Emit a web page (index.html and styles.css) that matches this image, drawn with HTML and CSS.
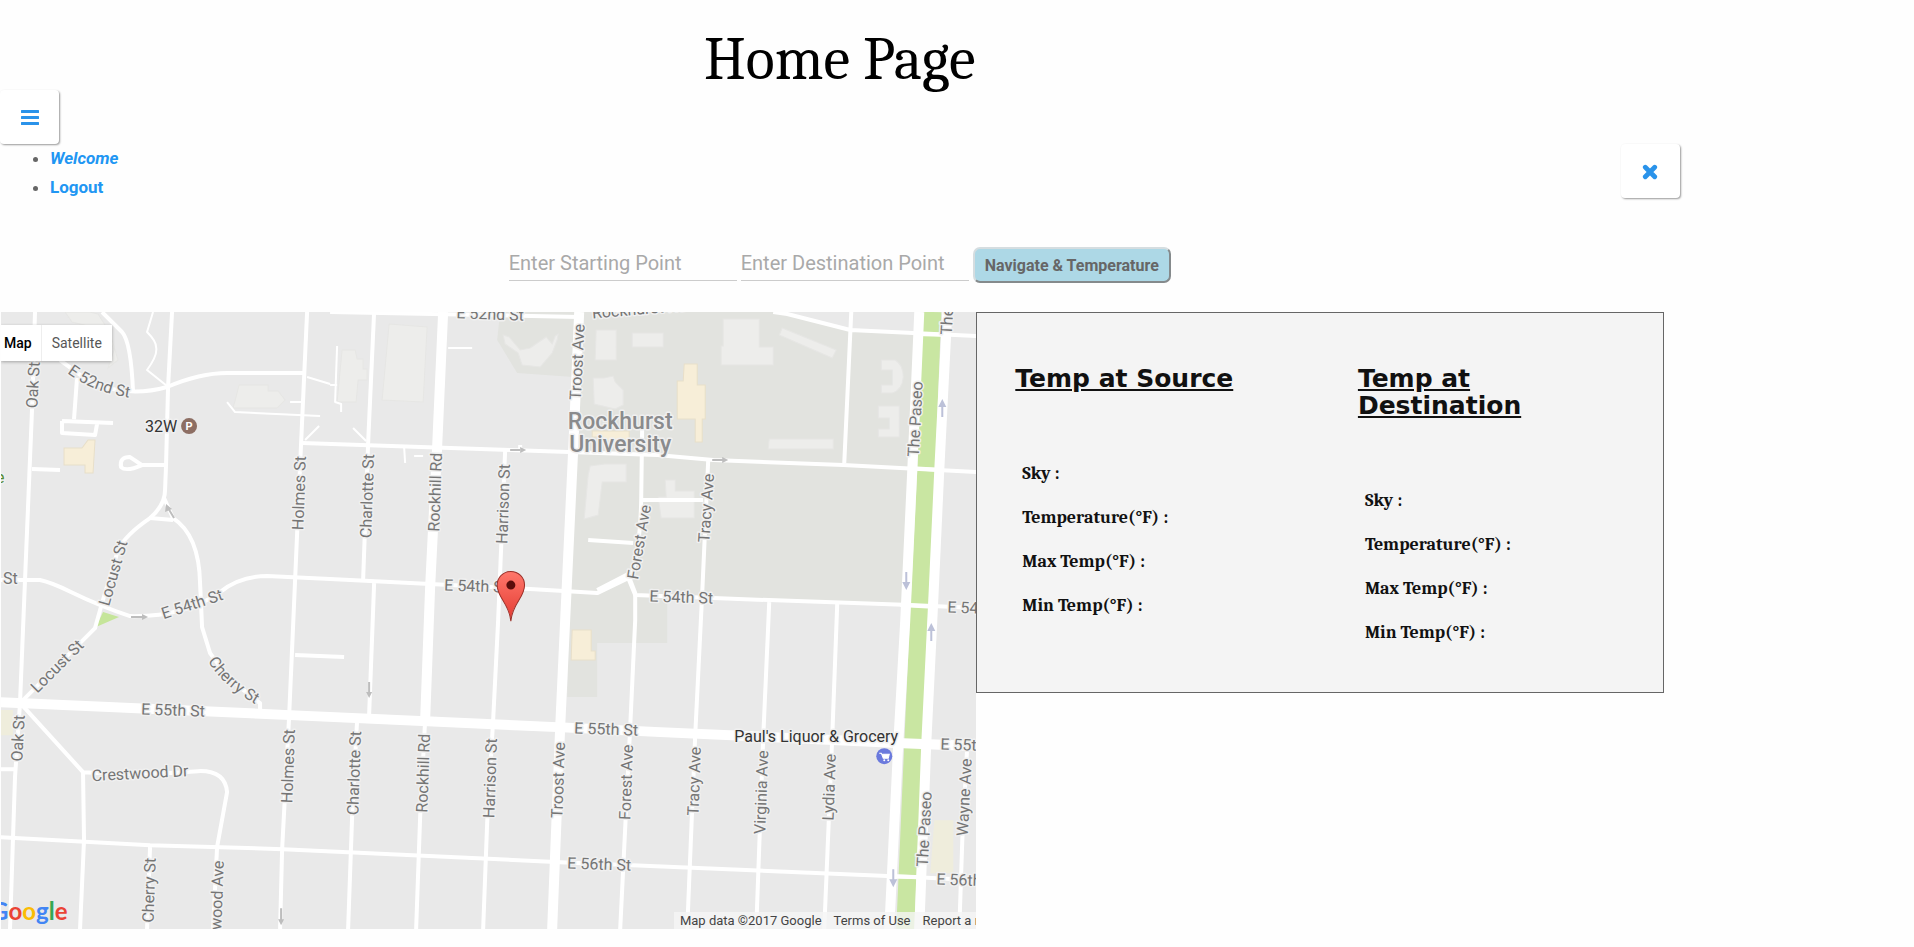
FILE: index.html
```html
<!DOCTYPE html>
<html lang="en">
<head>
<meta charset="utf-8">
<title>Home Page</title>
<link rel="stylesheet" href="styles.css">
</head>
<body>
<div class="page">
  <header>
    <h1 class="title">Home Page</h1>
    <button class="icon-button" type="button" aria-label="Open menu">
      <svg class="icon" viewBox="0 0 18 18" aria-hidden="true"><path d="M1 3.500h16M1 9.500h16M1 15.500h16" stroke="currentColor" stroke-width="3" stroke-linecap="round"/></svg>
    </button>
    <div class="menu">
      <ul class="menu-list">
        <li><a class="welcome" href="#">Welcome</a></li>
        <li><a href="#">Logout</a></li>
      </ul>
      <button class="icon-button" type="button" aria-label="Close menu">
        <svg class="icon" viewBox="0 0 18 18" aria-hidden="true"><path d="M4.300 5.300l9.400 9.400M13.700 5.300l-9.400 9.400" stroke="currentColor" stroke-width="4.800" stroke-linecap="round"/></svg>
      </button>
    </div>
  </header>
  <form class="route">
    <input type="text" placeholder="Enter Starting Point" aria-label="Enter Starting Point">
    <input type="text" placeholder="Enter Destination Point" aria-label="Enter Destination Point">
    <button class="submit" type="button">Navigate &amp; Temperature</button>
  </form>
  <main class="content">
    <section class="map" aria-label="Map">
      <svg class="map-canvas" viewBox="1 312 975 617" role="img" aria-label="Street map">
        <rect x="0" y="312" width="976" height="617" fill="#e9e9e9"/>
        <path class="campus" d="M500 312L497 340L517 373L573 377L567 697H597V643H667V597L910 605L919 333L850 330L787 314L773 312Z"/>
        <path class="lot" d="M0 710H13V735H0ZM934 820H953V873H930Z"/>
        <g class="building">
          <path d="M65 312L72 322L92 327L108 335L114 350L108 368L118 360L110 333L98 314L90 312Z"/>
          <path d="M239 385H268V391H278L285 400L277 408H233Z"/>
          <path d="M342 350H355L357 359H363V369H367V380H358L356 402H337Z"/>
          <path d="M389 324L427 327L423 402L382 400Z"/>
          <path d="M503 335L509 337L520 350L530 348L540 341L546 337L552 344L555 336L558 334L557 340L552 353L540 367L522 365L518 353L505 344Z"/>
          <path d="M596 330H616V360H595ZM632 333H663V347H632ZM593 378H604L613 376L615 382L623 390V405L615 409L594 404Z"/>
          <path d="M723 319H759V347H773V365H721V346H723Z"/>
          <path d="M782 328L836 350L832 358L779 335Z"/>
          <path d="M769 439H833V449H768ZM881 360H895Q903 365 903 377Q902 390 892 393H881V385H892V370H881ZM878 406H899V437H878V429H889V418H878Z"/>
          <path d="M590 466L605 464H626V482H602L598 515L584 519L588 475ZM665 480H675V491H694V518H661L658 497H666Z"/>
        </g>
        <g class="hall">
          <path d="M64 448H82L88 440H95L93 473H85V465H64Z"/>
          <path d="M684 364H697V385H705V419H702V442H695V419H677V381H683Z"/>
          <path d="M592 431H629V441H602V437H592ZM572 630H591V651H595V660H571Z"/>
        </g>
        <path class="park" d="M103 612L119 617L96 627Z"/>
        <path class="median" d="M932 312L926 470L919 610L913 743L905 929"/>
        <g class="lane">
          <path d="M153 312L147 332Q156 341 156 347Q158 355 147 370L167 386M227 402L235 412L320 416M290 402H303M307 377L330 384M337 346L335 402L341 404V412M330 385H337M305 440L319 426M353 428L366 441M448 348H472M414 456H423M404 447L405 463"/>
        </g>
        <g class="street">
          <path d="M35 312L32 410L25 580L20 703L15 777L10 929"/>
          <path d="M102 312L122 332Q131 342 133 392M60 360L90 382Q128 398 167 387Q200 373 227 373H303"/>
          <path d="M172 312L168 387L166 465L165 490Q165 505 150 518Q125 535 118 550L102 603L95 628L20 703"/>
          <path d="M164 498L173 518Q199 535 200 583L202 627L210 653Q228 680 260 703V713M150 518L173 520"/>
          <path d="M77 378L74 419M62 421L113 423M97 424L95 435L62 433V421M32 469L60 470M166 465H142L130 457Q119 457 121 467Q126 472 142 465"/>
          <path d="M0 580H40C64 585 75 598 130 616Q185 617 220 592Q240 576 267 576L330 579L530 589L597 593L628 578L635 595L713 598L910 605L976 608"/>
          <path d="M302 443L510 450L657 455L713 460L843 465L976 472"/>
          <path d="M307 312L301 443L295 580L289 717L282 850L280 929"/>
          <path d="M374 312L368 443L363 580M374 583L373 610L369 715M357 720L352 817L348 929"/>
          <path d="M425 720L420 817L416 929M505 450L498 620L493 720L487 823L483 929"/>
          <path d="M642 425L641 500Q640 550 630 580L635 593V620L630 727L620 929M642 500H703M588 540L633 543M597 590L628 574"/>
          <path d="M708 460L702 593L695 735L687 929M769 602L763 737L756 929M837 603L832 737L824 929"/>
          <path d="M520 445V452M330 312L579 317M773 312L787 314L850 330L976 336M851 312L844 463"/>
          <path d="M0 837L150 845L283 849L560 862L917 877L976 880M295 655L344 657M0 769H17"/>
          <path d="M23 706L83 772L84 840L80 929M83 772Q140 776 198 771Q225 770 227 792L217 847L213 929M150 847L147 929M967 745L962 840L959 929"/>
        </g>
        <g class="avenue">
          <path d="M443 312L437 447L430 587L425 720M579 312L573 450L565 620L560 727L552 929"/>
          <path d="M919 312L912 470L905 620L898 743L889 929M947 312L939 470L933 600L926 743L919 929"/>
          <path d="M0 702L290 715L557 727L660 732L903 743L976 746"/>
        </g>
        <path class="crossing" d="M915 334L950 335M908 468L943 470M900 605L937 607M897 743L930 744M888 876L924 877"/>
        <g class="arrow">
          <path d="M174 518L168 508M131 617H143M510 450H520M712 460H723M369 682V693M281 908V920"/>
          <path d="M165 512L166 504L172 509ZM142 614L148 617L142 620ZM520 447L526 450L520 453ZM722 457L728 460L722 463ZM366 692H372L369 698ZM278 919H284L281 925Z" fill="#bdbdbd" stroke="none"/>
          <path d="M942 417V405M906 572V584M931 641V629M893 869V880" stroke="#bcc1d8"/>
          <path d="M938 407H946L942 399ZM902 582H910L906 590ZM927 631H935L931 623ZM889 879H897L893 887Z" fill="#bcc1d8" stroke="none"/>
        </g>
        <defs>
          <path id="curve-52nd" d="M67 373Q92 392 132 398"/>
          <path id="curve-cherry" d="M208 661Q222 686 262 708"/>
        </defs>
        <g class="label">
          <text transform="translate(33 385) rotate(-87)">Oak St</text>
          <text class="along"><textPath href="#curve-52nd">E 52nd St</textPath></text>
          <text class="along" x="3" y="584">St</text>
          <text transform="translate(113 573) rotate(-74)">Locust St</text>
          <text transform="translate(192 604) rotate(-18)">E 54th St</text>
          <text transform="translate(299 493) rotate(-88)">Holmes St</text>
          <text transform="translate(367 496) rotate(-88)">Charlotte St</text>
          <text transform="translate(435 492) rotate(-88)">Rockhill Rd</text>
          <text transform="translate(503 504) rotate(-88)">Harrison St</text>
          <text transform="translate(577 362) rotate(-87)">Troost Ave</text>
          <text transform="translate(639 542) rotate(-80)">Forest Ave</text>
          <text transform="translate(706 508) rotate(-86)">Tracy Ave</text>
          <text transform="translate(915 419) rotate(-87)">The Paseo</text>
          <text transform="translate(948 297) rotate(-87)">The Paseo</text>
          <text transform="translate(490 314) rotate(2)">E 52nd St</text>
          <text transform="translate(639 309) rotate(-5)">Rockhurst Rd</text>
          <text transform="translate(476 586) rotate(2)">E 54th St</text>
          <text transform="translate(681 597) rotate(2)">E 54th St</text>
          <text transform="translate(979 608) rotate(2)">E 54th St</text>
          <text transform="translate(57 666) rotate(-45)">Locust St</text>
          <text class="along"><textPath href="#curve-cherry">Cherry St</textPath></text>
          <text transform="translate(173 710) rotate(2)">E 55th St</text>
          <text transform="translate(606 729) rotate(2)">E 55th St</text>
          <text transform="translate(972 745) rotate(2)">E 55th St</text>
          <text transform="translate(599 864) rotate(2)">E 56th St</text>
          <text transform="translate(968 880) rotate(2)">E 56th St</text>
          <text transform="translate(18 738) rotate(-87)">Oak St</text>
          <text transform="translate(140 773) rotate(-3)">Crestwood Dr</text>
          <text transform="translate(288 766) rotate(-88)">Holmes St</text>
          <text transform="translate(149 890) rotate(-88)">Cherry St</text>
          <text transform="translate(217 895) rotate(-88)">wood Ave</text>
          <text transform="translate(354 773) rotate(-88)">Charlotte St</text>
          <text transform="translate(423 773) rotate(-88)">Rockhill Rd</text>
          <text transform="translate(490 778) rotate(-88)">Harrison St</text>
          <text transform="translate(558 780) rotate(-88)">Troost Ave</text>
          <text transform="translate(626 782) rotate(-88)">Forest Ave</text>
          <text transform="translate(694 781) rotate(-88)">Tracy Ave</text>
          <text transform="translate(761 792) rotate(-88)">Virginia Ave</text>
          <text transform="translate(829 787) rotate(-88)">Lydia Ave</text>
          <text transform="translate(924 829) rotate(-87)">The Paseo</text>
          <text transform="translate(964 797) rotate(-87)">Wayne Ave</text>
          <text class="district" x="620" y="421">Rockhurst</text>
          <text class="district" x="620" y="444">University</text>
          <text class="along place" x="145" y="432">32W</text>
          <text class="along place" x="734" y="742">Paul's Liquor &amp; Grocery</text>
          <text class="along green" x="-4" y="483">e</text>
        </g>
        <circle cx="189" cy="426" r="8" fill="#8d6e63"/>
        <text class="badge" x="189" y="430">P</text>
        <circle cx="884" cy="756" r="8" fill="#6b7add"/>
        <path d="M879 753H881L883 758H888L889 754H882" fill="#fff" stroke="#fff" stroke-width="1"/>
        <circle cx="884" cy="760" r="1" fill="#fff"/><circle cx="888" cy="760" r="1" fill="#fff"/>
        <defs><linearGradient id="pin" x2="0" y2="1"><stop offset="0" stop-color="#ff776b"/><stop offset="1" stop-color="#e33b32"/></linearGradient></defs>
        <path d="M510.700 621C509 603 497 598 497 585A13.700 13.700 0 0 1 524.400 585C524.400 598 512.400 603 510.700 621Z" fill="url(#pin)" stroke="#9b3029"/>
        <circle cx="510.700" cy="585" r="4.500" fill="#590d0b"/>
        <text class="logo" x="-9" y="920"><tspan fill="#4285f4">G</tspan><tspan fill="#ea4335">o</tspan><tspan fill="#fbbc05">o</tspan><tspan fill="#4285f4">g</tspan><tspan fill="#34a853">l</tspan><tspan fill="#ea4335">e</tspan></text>
      </svg>
      <div class="map-type">
        <button class="active" type="button">Map</button>
        <button type="button">Satellite</button>
      </div>
      <div class="attribution">
        <span>Map data ©2017 Google</span>
        <a href="#">Terms of Use</a>
        <a href="#">Report a map error</a>
      </div>
    </section>
    <section class="weather">
      <div>
        <h2>Temp at Source</h2>
        <p>Sky :</p>
        <p>Temperature(°F) :</p>
        <p>Max Temp(°F) :</p>
        <p>Min Temp(°F) :</p>
      </div>
      <div>
        <h2>Temp at Destination</h2>
        <p>Sky :</p>
        <p>Temperature(°F) :</p>
        <p>Max Temp(°F) :</p>
        <p>Min Temp(°F) :</p>
      </div>
    </section>
  </main>
</div>
</body>
</html>
```
FILE: styles.css
```css
* { box-sizing: border-box; }

body {
  margin: 0;
  background: #fefefe;
  color: #666;
  font: 16px/29px Roboto, sans-serif;
}

.page { width: 87.75%; }

.title {
  margin: 0;
  padding: 30px 0 0;
  color: #000;
  font: 60px/60px Cambria, Caladea, "Liberation Serif", serif;
  text-align: center;
}

.icon-button {
  display: flex;
  align-items: center;
  justify-content: center;
  width: 59px;
  height: 54px;
  padding: 0;
  border: 0;
  border-radius: 4px;
  background: #fff;
  color: #2a93ea;
  box-shadow: 1px 1px 2px rgba(0, 0, 0, 0.4);
}

.icon { width: 18px; height: 18px; fill: none; }

.menu {
  display: flex;
  align-items: flex-start;
  justify-content: space-between;
}

.menu-list { margin: 0; padding-left: 50px; font-size: 17px; font-weight: 700; }
.menu-list a { color: #2196f3; text-decoration: none; }
.menu-list .welcome { font-style: italic; }

.route {
  display: flex;
  align-items: flex-start;
  justify-content: center;
  gap: 4px;
  padding: 45px 0 29px;
}

.route input {
  width: 228px;
  height: 34px;
  padding: 0 0 2px;
  border: 0;
  border-bottom: 1px solid #ccc;
  background: transparent;
  color: #555;
  font: 20px/29px Roboto, sans-serif;
}

.route input::placeholder { color: #a9a9a9; opacity: 1; }

.submit {
  height: 36px;
  padding: 0 10px;
  border: 2px outset #d5dde0;
  border-radius: 7px;
  background: #add8e6;
  color: #666;
  font: 700 16px/29px Roboto, sans-serif;
}

.content {
  display: grid;
  grid-template-columns: 975fr 687fr 16fr;
  align-items: start;
  padding-left: 1px;
}

.map { position: relative; overflow: hidden; }
.map-canvas { display: block; width: 100%; height: auto; }

.campus { fill: #e2e3df; }
.lot { fill: #efeddc; }
.building { fill: #ededeb; stroke: #e6e6e4; }
.hall { fill: #f7eed8; stroke: #e8dfc9; }
.park { fill: #c5e59a; }
.median { fill: none; stroke: #c9e6a2; stroke-width: 18; }
.lane, .street, .avenue, .crossing { fill: none; stroke: #fff; stroke-linejoin: round; }
.lane { stroke-width: 2; }
.street { stroke-width: 4; }
.avenue { stroke-width: 10; }
.crossing { stroke-width: 4; }
.arrow { fill: none; stroke: #bdbdbd; stroke-width: 2; }

.label {
  fill: #757575;
  stroke: #f0f0f0;
  stroke-width: 3;
  stroke-linejoin: round;
  paint-order: stroke;
  font: 16px Roboto, sans-serif;
  text-anchor: middle;
  dominant-baseline: central;
}

.label .along { text-anchor: start; dominant-baseline: alphabetic; }
.label .place { fill: #333; }
.label .green { fill: #558b2f; }
.label .district { fill: #8a8b8d; font-size: 23px; font-weight: 500; }
.badge { fill: #fff; font: 700 11px Roboto, sans-serif; text-anchor: middle; }
.logo { font: 700 24px Lato, sans-serif; }

.map-type {
  position: absolute;
  top: 13px;
  left: 0;
  display: flex;
  background: #fff;
  box-shadow: 0 1px 3px rgba(0, 0, 0, 0.3);
}

.map-type button {
  height: 36px;
  padding: 0 10px;
  border: 0;
  background: none;
  color: #565656;
  font: 14px/36px Roboto, sans-serif;
}

.map-type .active {
  padding: 0 9px 0 3px;
  border-right: 1px solid #eee;
  color: #000;
  font-weight: 500;
}

.attribution {
  position: absolute;
  bottom: 0;
  left: 69%;
  display: flex;
  gap: 12px;
  padding: 0 6px;
  background: rgba(245, 245, 245, 0.8);
  color: #444;
  font-size: 13px;
  line-height: 17px;
  white-space: nowrap;
}

.attribution a { color: inherit; text-decoration: none; }

.weather {
  display: grid;
  grid-template-columns: 1fr 1fr;
  padding: 52px 0 45px;
  border: 1px solid #666;
  background: #f4f4f4;
  color: #111;
}

.weather > div { padding: 0 72px 0 38px; }

.weather h2 {
  margin: 0 0 52px;
  font: 700 25px/27px "DejaVu Sans", sans-serif;
  text-decoration: underline;
}

.weather p {
  margin: 0;
  padding: 15px 7px 0;
  font: 700 18px/29px Cambria, Caladea, "Liberation Serif", serif;
}
```
